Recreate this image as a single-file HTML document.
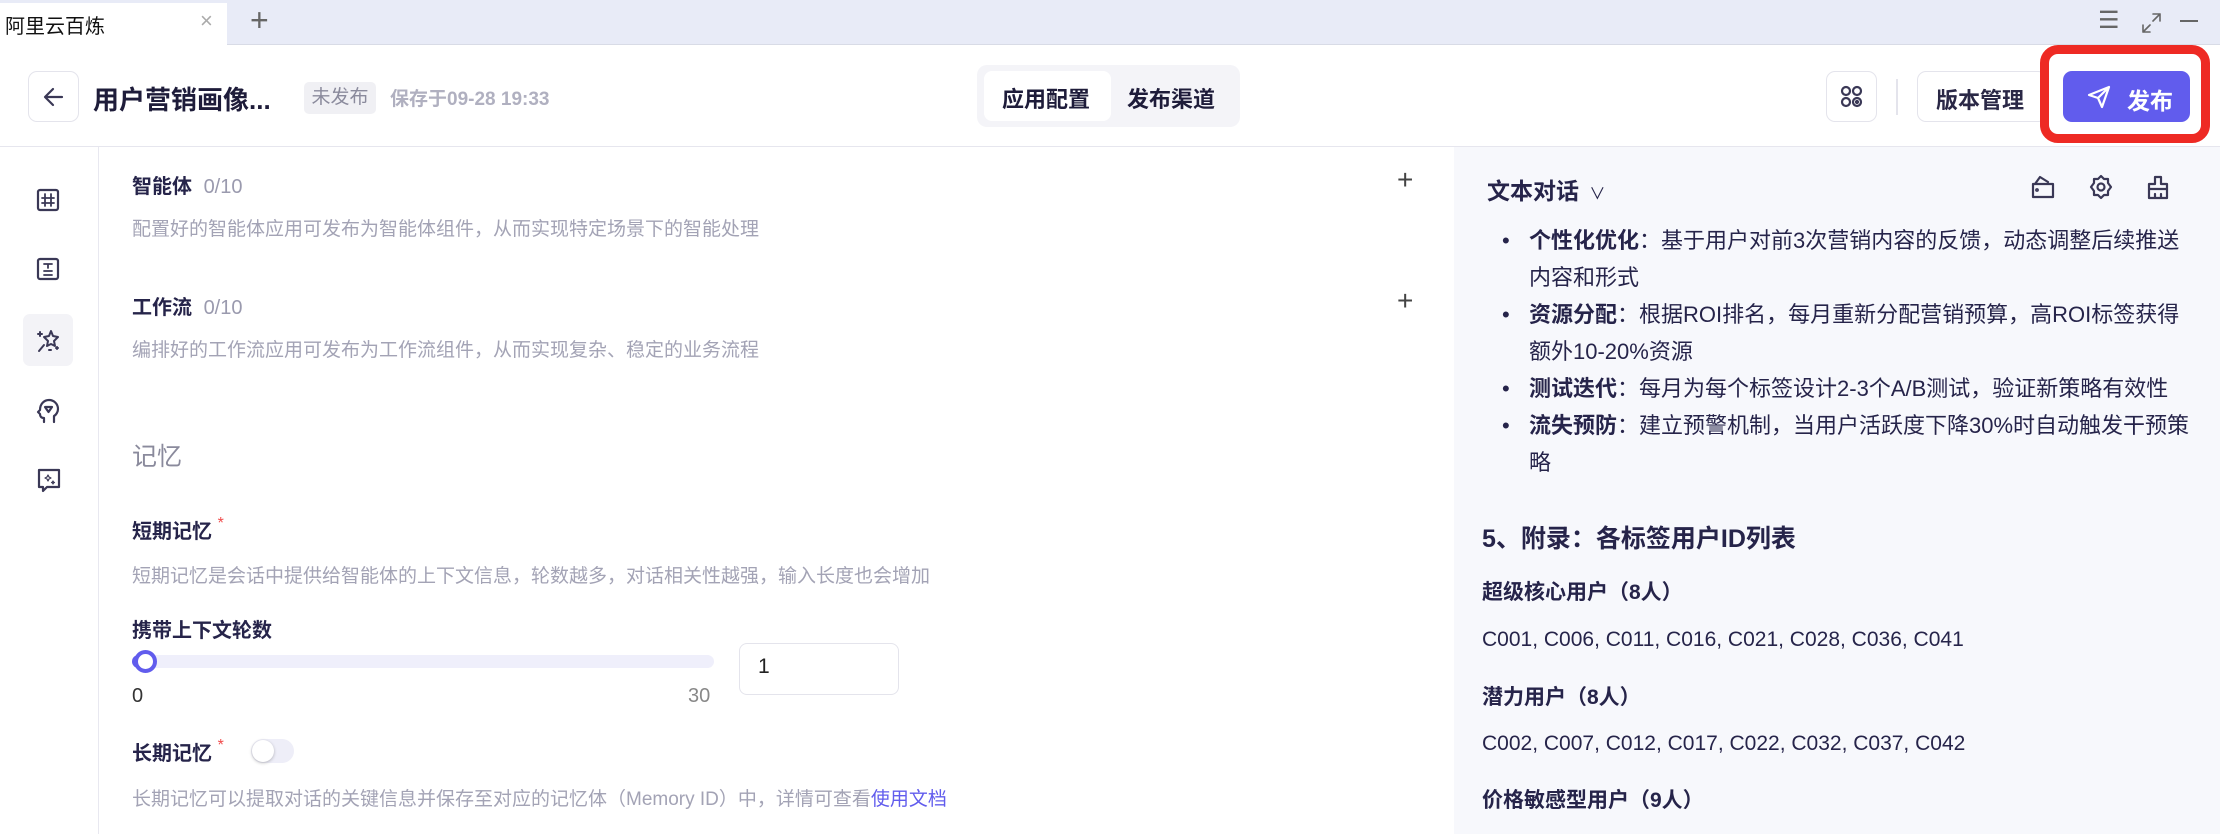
<!DOCTYPE html>
<html><head><meta charset="utf-8"><style>
*{margin:0;padding:0;box-sizing:border-box}
body{width:2220px;height:834px;overflow:hidden;background:#fff;font-family:"Liberation Sans","Noto Sans CJK SC",sans-serif;color:#26244a;position:relative}
.a{position:absolute;white-space:nowrap}
.g{color:#a3a3b5}
svg{position:absolute;fill:none;stroke:#3a3856;stroke-width:2.6;stroke-linecap:round;stroke-linejoin:round}
</style></head><body>
<div class="a" style="left:0;top:0;width:2220px;height:45px;background:#e8ebf7;border-bottom:1px solid #d8dbe6"></div>
<div class="a" style="left:0;top:3px;width:227px;height:42px;background:#fff"></div>
<div class="a" style="left:5px;top:10px;font-size:20px;color:#111">阿里云百炼</div>
<div class="a" style="left:200px;top:8px;font-size:22px;color:#aaa">×</div>
<div class="a" style="left:250px;top:2px;font-size:32px;color:#666;font-weight:300">+</div>
<div class="a" style="left:2098px;top:6px;font-size:24px;color:#666">☰</div>
<svg style="left:2140px;top:12px;stroke:#666;stroke-width:1.6" width="24" height="22"><path d="M13 2h7v7M20 2l-7 7M3 13v7h7M3 20l7-7"/></svg>
<div class="a" style="left:2180px;top:20px;width:18px;height:2px;background:#666"></div>
<div class="a" style="left:0;top:146px;width:2220px;height:1px;background:#e6e6ee"></div>
<div class="a" style="left:28px;top:71px;width:51px;height:51px;border:1px solid #e4e4ec;border-radius:9px"></div>
<svg style="left:40px;top:83px" width="28" height="28"><path d="M22 14H6M13 6l-8 8 8 8" stroke-width="2.2"/></svg>
<div class="a" style="left:93px;top:80px;font-size:26px;font-weight:bold;color:#1e1c3a">用户营销画像...</div>
<div class="a" style="left:304px;top:82px;width:72px;height:32px;background:#f0f0f4;border-radius:5px;font-size:19px;color:#8a8a9c;text-align:center;line-height:32px">未发布</div>
<div class="a g" style="left:390px;top:84px;font-size:19px;font-weight:bold;color:#b0b0c0">保存于09-28 19:33</div>
<div class="a" style="left:977px;top:65px;width:263px;height:62px;background:#f4f4f8;border-radius:10px"></div>
<div class="a" style="left:984px;top:71px;width:127px;height:50px;background:#fff;border-radius:8px"></div>
<div class="a" style="left:1002px;top:82px;font-size:22px;font-weight:bold;color:#1e1c3a">应用配置</div>
<div class="a" style="left:1127px;top:82px;font-size:22px;font-weight:bold;color:#1e1c3a">发布渠道</div>
<div class="a" style="left:1826px;top:71px;width:51px;height:51px;border:1px solid #e4e4ec;border-radius:9px"></div>
<svg style="left:1839px;top:84px;stroke-width:2.2" width="26" height="26"><circle cx="7" cy="7" r="4"/><circle cx="18" cy="7" r="4"/><circle cx="7" cy="18" r="4"/><circle cx="18" cy="18" r="4"/><circle cx="18" cy="18" r="1"/></svg>
<div class="a" style="left:1896px;top:79px;width:2px;height:36px;background:#e4e4ec"></div>
<div class="a" style="left:1917px;top:71px;width:130px;height:51px;border:1px solid #e4e4ec;border-radius:9px"></div>
<div class="a" style="left:1936px;top:83px;font-size:22px;font-weight:bold;color:#2a2846">版本管理</div>
<div class="a" style="left:2040px;top:45px;width:170px;height:98px;border:9px solid #ee2a24;border-radius:18px;background:#fff"></div>
<div class="a" style="left:2063px;top:71px;width:127px;height:51px;background:#615ced;border-radius:9px"></div>
<svg style="left:2086px;top:84px;stroke:#fff;stroke-width:2.2" width="26" height="26"><path d="M3 11L23 3 16 23 12 14Z M12 14L23 3"/></svg>
<div class="a" style="left:2127px;top:82px;font-size:23px;font-weight:bold;color:#fff">发布</div>
<div class="a" style="left:98px;top:147px;width:1px;height:687px;background:#e8e8f0"></div>
<div class="a" style="left:23px;top:314px;width:50px;height:52px;background:#f3f3f7;border-radius:7px"></div>
<svg style="left:36px;top:188px;stroke-width:2.2" width="24" height="24"><rect x="2" y="2" width="20" height="20" rx="2"/><path d="M9 6v12M15 6v12M6 10h12M6 15h12" stroke-width="1.8"/></svg>
<svg style="left:36px;top:257px;stroke-width:2.2" width="24" height="24"><rect x="2" y="2" width="20" height="20" rx="2"/><path d="M8 7h8M12 7v4M8 14h8M8 18h8" stroke-width="1.8"/></svg>
<svg style="left:35px;top:328px;stroke-width:2" width="28" height="26"><path d="M16 3l2 5 5 1-4 4 1 5-4-2-4 2 1-5-4-4 5-1z"/><path d="M9 17l-5 6M5 4v4M3 6h4M14 22h2M21 20h2M22 19v2"/></svg>
<svg style="left:36px;top:397px;stroke-width:2.2" width="24" height="28"><path d="M8 25v-4c-3 0-4-2-4-4l-2-2 2-2c0-6 4-10 9-10s9 4 9 9c0 3-2 6-4 7v6"/><path d="M9 10h7l-3.5 5z"/></svg>
<svg style="left:36px;top:467px;stroke-width:2.2" width="26" height="28"><path d="M3 3h20v17H11l-4 4v-4H3z"/><path d="M12 8l1 2 2 1-2 1-1 2-1-2-2-1 2-1zM17 14l.5 1 1 .5-1 .5-.5 1-.5-1-1-.5 1-.5z" stroke-width="1.2"/></svg>
<div class="a" style="left:132px;top:170px;font-size:20px;font-weight:bold">智能体 <span style="font-weight:normal;color:#9a9aae;margin-left:6px">0/10</span></div>
<div class="a g" style="left:132px;top:214px;font-size:19px">配置好的智能体应用可发布为智能体组件，从而实现特定场景下的智能处理</div>
<div class="a" style="left:1397px;top:164px;font-size:28px;font-weight:300;color:#444">+</div>
<div class="a" style="left:132px;top:291px;font-size:20px;font-weight:bold">工作流 <span style="font-weight:normal;color:#9a9aae;margin-left:6px">0/10</span></div>
<div class="a g" style="left:132px;top:335px;font-size:19px">编排好的工作流应用可发布为工作流组件，从而实现复杂、稳定的业务流程</div>
<div class="a" style="left:1397px;top:285px;font-size:28px;font-weight:300;color:#444">+</div>
<div class="a" style="left:132px;top:437px;font-size:25px;color:#8a8a9c">记忆</div>
<div class="a" style="left:132px;top:515px;font-size:20px;font-weight:bold">短期记忆 <span style="color:#f04a4a;font-weight:normal;font-size:16px;vertical-align:top">*</span></div>
<div class="a g" style="left:132px;top:561px;font-size:19px">短期记忆是会话中提供给智能体的上下文信息，轮数越多，对话相关性越强，输入长度也会增加</div>
<div class="a" style="left:132px;top:614px;font-size:20px;font-weight:bold">携带上下文轮数</div>
<div class="a" style="left:132px;top:655px;width:582px;height:13px;background:#efeffb;border-radius:7px"></div>
<div class="a" style="left:132px;top:655px;width:14px;height:13px;background:#615ced;border-radius:7px 0 0 7px"></div>
<div class="a" style="left:134px;top:650px;width:23px;height:23px;background:#fff;border:4px solid #615ced;border-radius:50%"></div>
<div class="a" style="left:132px;top:685px;font-size:20px;color:#333">0</div>
<div class="a" style="left:688px;top:685px;font-size:20px;color:#888">30</div>
<div class="a" style="left:739px;top:643px;width:160px;height:52px;border:1px solid #e4e4ec;border-radius:8px"></div>
<div class="a" style="left:758px;top:655px;font-size:21px;color:#222">1</div>
<div class="a" style="left:132px;top:737px;font-size:20px;font-weight:bold">长期记忆 <span style="color:#f04a4a;font-weight:normal;font-size:16px;vertical-align:top">*</span></div>
<div class="a" style="left:251px;top:739px;width:43px;height:24px;background:#eeeef8;border-radius:12px"></div>
<div class="a" style="left:252px;top:740px;width:22px;height:22px;background:#fff;border-radius:50%;box-shadow:0 1px 3px rgba(0,0,0,.25)"></div>
<div class="a g" style="left:132px;top:784px;font-size:19px">长期记忆可以提取对话的关键信息并保存至对应的记忆体（Memory ID）中，详情可查看<span style="color:#615ced">使用文档</span></div>
<div class="a" style="left:1454px;top:147px;width:766px;height:687px;background:#f7f8fc"></div>
<div class="a" style="left:1487px;top:172px;font-size:23px;font-weight:bold">文本对话 <span style="font-weight:normal;font-size:16px;margin-left:4px">∨</span></div>
<svg style="left:2030px;top:174px;stroke-width:2.2" width="26" height="26"><path d="M3 10h20v13H3zM5 10l5-7 8 5"/><circle cx="7" cy="16" r=".8"/></svg>
<svg style="left:2088px;top:174px;stroke-width:2.2" width="26" height="26"><path d="M13 2l3 3h4v4l3 4-3 4v4h-4l-3 3-3-3H6v-4l-3-4 3-4V5h4z"/><circle cx="13" cy="13" r="3.5"/></svg>
<svg style="left:2145px;top:174px;stroke-width:2.2" width="26" height="26"><path d="M10 3h6v7h6v5H4v-5h6zM4 15v9h18v-9M10 24v-4M16 24v-4"/></svg>
<div style="position:absolute;left:1487px;top:222px;font-size:22px;line-height:37px;color:#26244a;width:706px">
<div style="position:relative;padding-left:42px"><span style="position:absolute;left:15px">•</span><b>个性化优化</b>：基于用户对前3次营销内容的反馈，动态调整后续推送内容和形式</div>
<div style="position:relative;padding-left:42px"><span style="position:absolute;left:15px">•</span><b>资源分配</b>：根据ROI排名，每月重新分配营销预算，高ROI标签获得额外10-20%资源</div>
<div style="position:relative;padding-left:42px"><span style="position:absolute;left:15px">•</span><b>测试迭代</b>：每月为每个标签设计2-3个A/B测试，验证新策略有效性</div>
<div style="position:relative;padding-left:42px"><span style="position:absolute;left:15px">•</span><b>流失预防</b>：建立预警机制，当用户活跃度下降30%时自动触发干预策略</div>
</div>
<div class="a" style="left:1482px;top:519px;font-size:25px;font-weight:bold">5、附录：各标签用户ID列表</div>
<div class="a" style="left:1482px;top:576px;font-size:21px;font-weight:bold">超级核心用户（8人）</div>
<div class="a" style="left:1482px;top:628px;font-size:21px">C001, C006, C011, C016, C021, C028, C036, C041</div>
<div class="a" style="left:1482px;top:681px;font-size:21px;font-weight:bold">潜力用户（8人）</div>
<div class="a" style="left:1482px;top:732px;font-size:21px">C002, C007, C012, C017, C022, C032, C037, C042</div>
<div class="a" style="left:1482px;top:784px;font-size:21px;font-weight:bold">价格敏感型用户（9人）</div>
</body></html>
